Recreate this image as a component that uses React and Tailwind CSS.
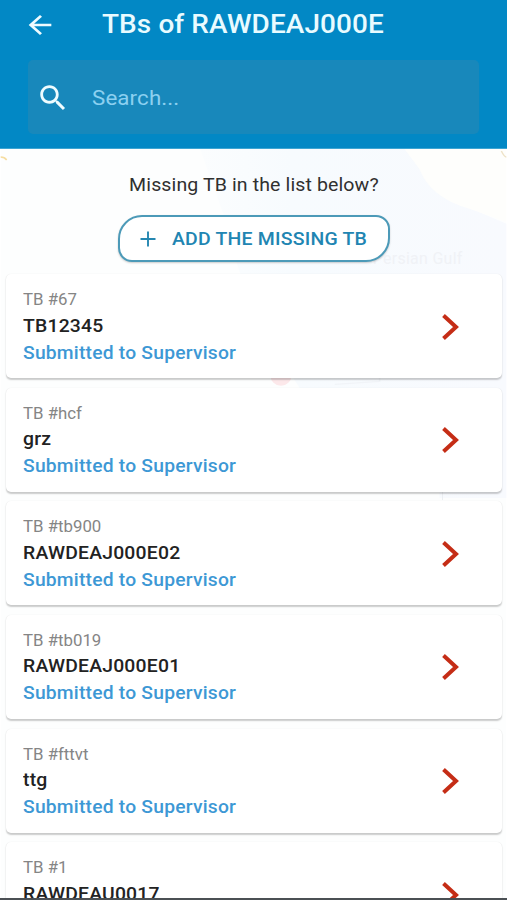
import React from "react";

const ITEMS = [
  { id: "67", name: "TB12345" },
  { id: "hcf", name: "grz" },
  { id: "tb900", name: "RAWDEAJ000E02" },
  { id: "tb019", name: "RAWDEAJ000E01" },
  { id: "fttvt", name: "ttg" },
  { id: "1", name: "RAWDEAU0017" },
];

function Header() {
  return (
    <header className="h-[149px] shrink-0 bg-[#0288c5] border-b border-[#3da5d3] px-7">
      <div className="flex h-[60px] items-start">
        <button aria-label="Back" className="mt-[10px] -ml-[5px] shrink-0">
          <svg viewBox="0 0 24 24" preserveAspectRatio="none" className="h-[30px] w-[34px] fill-[#eefbff]">
            <path d="M20 11H7.83l5.59-5.59L12 4l-8 8 8 8 1.41-1.41L7.83 13H20v-2z" />
          </svg>
        </button>
        <h1 className="ml-[45px] mt-[8px] origin-left scale-x-[1.095] whitespace-nowrap text-[25.5px] leading-8 font-medium tracking-[0.1px] text-[#e9fbff]">
          TBs of RAWDEAJ000E
        </h1>
      </div>
      <div className="flex h-[74px] items-center rounded-[5px] bg-[#1888bb] pl-2">
        <svg viewBox="0 0 24 24" className="mt-[2px] size-[34px] fill-[#effcff]">
          <path d="M15.5 14h-.79l-.28-.27C15.41 12.59 16 11.11 16 9.5 16 5.91 13.09 3 9.5 3S3 5.91 3 9.5 5.91 16 9.5 16c1.61 0 3.09-.59 4.23-1.57l.27.28v.79l5 4.99L20.49 19l-4.99-5zm-6 0C7.01 14 5 11.99 5 9.5S7.01 5 9.5 5 14 7.01 14 9.5 11.99 14 9.5 14z" />
        </svg>
        <span className="ml-[22px] mt-[2px] origin-left scale-x-[1.09] text-[20.5px] tracking-[0.1px] text-[#8bd0f0]">
          Search...
        </span>
      </div>
    </header>
  );
}

// Washed-out map that shows through between the cards
function MapBackdrop() {
  return (
    <svg viewBox="0 0 507 751" className="absolute inset-0 h-full w-full" aria-hidden="true">
      <defs>
        <linearGradient id="sea" x1="0" x2="1">
          <stop offset="0" stopColor="#fbfdfe" />
          <stop offset="0.3" stopColor="#f7fbfe" />
          <stop offset="1" stopColor="#f8fafe" />
        </linearGradient>
      </defs>
      <rect width="507" height="751" fill="#fdfefe" />
      <path d="M200 0H405C425 25 438 52 465 57L507 75V350H440V240H300Q240 150 225 70Z" fill="url(#sea)" />
      <path d="M405 0H507V73L470 60Q430 48 420 20Z" fill="#fefefc" />
      <path d="M0 8q4 0 6 3" fill="none" stroke="#f6dda0" strokeWidth="1.5" />
      <path d="M502 2q3 6 5 6" fill="none" stroke="#eee3c8" strokeWidth="1.5" />
      <circle cx="281" cy="227" r="10.5" fill="#fce8ea" />
      <path d="M335 236l45-3v-4" fill="none" stroke="#f1f4f8" strokeWidth="1.5" />
      <path d="M443 340v12" stroke="#eceff3" />
      <text x="373" y="115" fill="#f0f2f6" fontSize="16" letterSpacing="0.3">
        Persian Gulf
      </text>
    </svg>
  );
}

function TbCard({ item }) {
  return (
    <li className="flex h-[104px] shrink-0 items-start justify-between rounded-[5px] bg-white pl-[17px] pr-[41px] shadow-[0_1.5px_1.5px_rgba(0,0,0,0.2),0_0_1px_rgba(0,0,0,0.08)]">
      <div className="flex flex-col whitespace-nowrap pt-[13px]">
        <span className="origin-left scale-x-[1.05] text-[16px] leading-[26px] text-[#858585]">TB #{item.id}</span>
        <span className="-mt-[1.5px] origin-left scale-x-[1.075] text-[18px] leading-[27px] font-medium tracking-[0.2px] text-[#222]">
          {item.name}
        </span>
        <span className="origin-left scale-x-[1.07] text-[18px] leading-[27px] font-medium tracking-[0.2px] text-[#3d98d5]">
          Submitted to Supervisor
        </span>
      </div>
      <svg viewBox="0 0 20 28" className="mt-[38.5px] h-7 w-5" fill="none" stroke="#c52d16" strokeWidth="4">
        <path d="M2.5 2.5 15 14 2.5 25.5" />
      </svg>
    </li>
  );
}

export default function App() {
  return (
    <div className="flex h-[900px] w-[507px] flex-col overflow-hidden border-b-2 border-[#4b5054] bg-white font-['Roboto',sans-serif]">
      <Header />
      <main className="relative min-h-0 flex-1 overflow-hidden">
        <MapBackdrop />
        <div className="relative flex flex-col items-center">
          <p className="ml-px mt-[22px] scale-x-[1.086] whitespace-nowrap text-[18px] leading-[27px] tracking-[0.1px] text-[#303030]">
            Missing TB in the list below?
          </p>
          <button className="ml-px mt-[17px] flex h-[47px] w-[272px] items-center rounded-tl-[24px] rounded-tr-[14px] rounded-br-[24px] rounded-bl-[14px] border-2 border-[#4c9ab8] bg-white pl-[20px] shadow-[0_1px_2px_rgba(0,0,0,0.2)]">
            <svg viewBox="0 0 16 16" className="size-4" stroke="#2587b1" strokeWidth="1.9">
              <path d="M8 0.5v15M0.5 8h15" />
            </svg>
            <span className="ml-4 origin-left scale-x-[1.08] whitespace-nowrap text-[18px] font-medium tracking-[0.2px] text-[#2185b2]">
              ADD THE MISSING TB
            </span>
          </button>
          <ul className="mt-[12px] flex w-full flex-col gap-[9.65px] pl-[6px] pr-[5px]">
            {ITEMS.map((item) => (
              <TbCard key={item.id} item={item} />
            ))}
          </ul>
        </div>
      </main>
    </div>
  );
}
